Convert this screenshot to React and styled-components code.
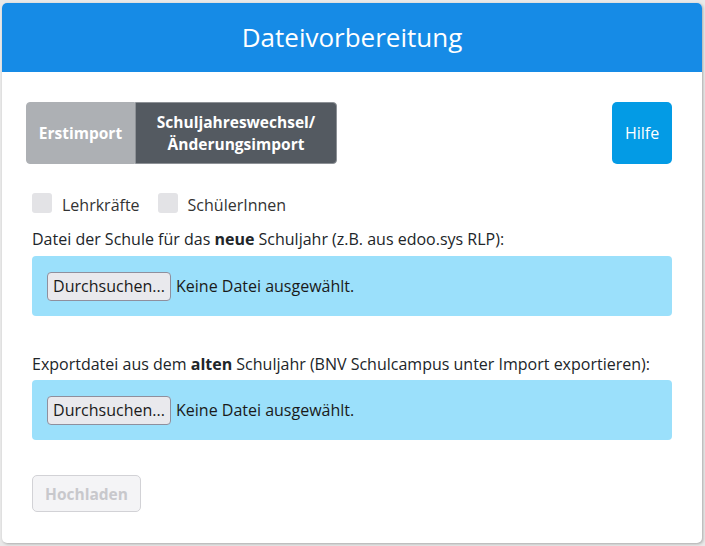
import React from "react";
import styled, { createGlobalStyle } from "styled-components";

const GlobalStyle = createGlobalStyle`
  html, body { margin: 0; padding: 0; }
  body {
    background: #e9e9e9;
    font-family: "Open Sans", "Liberation Sans", sans-serif;
    color: #212529;
  }
`;

const Page = styled.div`
  padding: 3px 3px 3px 2px;
`;

const Card = styled.div`
  width: 700px;
  height: 540px;
  background: #fff;
  border-radius: 5px;
  box-shadow: 1px 1px 3px rgba(0, 0, 0, 0.28);
  display: flex;
  flex-direction: column;
  overflow: hidden;
`;

const Header = styled.div`
  height: 69px;
  background: #168be6;
  display: flex;
  align-items: center;
  justify-content: center;
`;

const Title = styled.h1`
  margin: 0;
  font-weight: 400;
  font-size: 26px;
  font-stretch: 90%;
  color: #fff;
  line-height: 1;
  padding-bottom: 1px;
`;

const Body = styled.div`
  padding: 30px 30px 0 30px;
  display: flex;
  flex-direction: column;
`;

const TopRow = styled.div`
  display: flex;
  justify-content: space-between;
  align-items: stretch;
  height: 62px;
`;

const TabGroup = styled.div`
  display: flex;
  margin-left: -6px;
`;

const Tab = styled.button`
  font-family: "Open Sans", sans-serif;
  font-weight: 700;
  font-size: 15.5px;
  font-stretch: 88%;
  line-height: 22px;
  color: #fff;
  border: 1px solid ${(p) => (p.$active ? "#8d9196" : "#adb0b4")};
  background: ${(p) => (p.$active ? "#545a61" : "#adb0b4")};
  width: ${(p) => p.$w}px;
  padding: 0 4px;
  border-radius: ${(p) => (p.$first ? "4px 0 0 4px" : "0 4px 4px 0")};
`;

const HelpButton = styled.button`
  font-family: "Open Sans", sans-serif;
  font-size: 16px;
  font-stretch: 90%;
  color: #fff;
  background: #039be5;
  border: none;
  border-radius: 5px;
  width: 60px;
  padding: 0;
`;

const CheckRow = styled.div`
  display: flex;
  align-items: center;
  margin-top: 29px;
  height: 20px;
  gap: 18px;
`;

const CheckItem = styled.label`
  display: flex;
  align-items: center;
  gap: 10px;
  font-size: 16px;
  color: #333;
  span + span { padding-top: 3px; }
`;

const CheckBox = styled.span`
  width: 20px;
  height: 20px;
  border-radius: 3px;
  background: #e3e3e6;
`;

const FieldLabel = styled.div`
  font-size: 16px;
  line-height: 24px;
  margin-top: ${(p) => p.$mt}px;
  color: #212529;
  b { font-weight: 700; }
`;

const FileBox = styled.div`
  margin-top: ${(p) => p.$mt}px;
  height: 60px;
  background: #9be0fb;
  border-radius: 4px;
  display: flex;
  align-items: center;
  padding: 0 15px;
  gap: 5px;
  font-size: 16px;
  color: #1a1a1a;
`;

const BrowseButton = styled.button`
  font-family: "Open Sans", sans-serif;
  font-size: 16px;
  height: 29px;
  width: 124px;
  padding: 0;
  background: #e9e9ed;
  border: 1px solid #8f8f9d;
  border-radius: 4px;
  color: #1a1a1a;
`;

const UploadButton = styled.button`
  margin-top: 35px;
  align-self: flex-start;
  font-family: "Open Sans", sans-serif;
  font-weight: 700;
  font-size: 15.5px;
  font-stretch: 88%;
  color: #c8c8cc;
  background: #f4f4f6;
  border: 1px solid #d2d2d6;
  border-radius: 5px;
  width: 109px;
  height: 37px;
  padding: 0;
`;

export default function App() {
  return (
    <>
      <GlobalStyle />
      <Page>
        <Card>
          <Header>
            <Title>Dateivorbereitung</Title>
          </Header>
          <Body>
            <TopRow>
              <TabGroup>
                <Tab $first $w={109}>Erstimport</Tab>
                <Tab $active $w={202}>
                  Schuljahreswechsel/
                  <br />
                  Änderungsimport
                </Tab>
              </TabGroup>
              <HelpButton>Hilfe</HelpButton>
            </TopRow>
            <CheckRow>
              <CheckItem>
                <CheckBox />
                <span>Lehrkräfte</span>
              </CheckItem>
              <CheckItem>
                <CheckBox />
                <span>SchülerInnen</span>
              </CheckItem>
            </CheckRow>
            <FieldLabel $mt={14}>
              Datei der Schule für das <b>neue</b> Schuljahr (z.B. aus edoo.sys RLP):
            </FieldLabel>
            <FileBox $mt={5}>
              <BrowseButton>Durchsuchen...</BrowseButton>
              <span>Keine Datei ausgewählt.</span>
            </FileBox>
            <FieldLabel $mt={36}>
              Exportdatei aus dem <b>alten</b> Schuljahr (BNV Schulcampus unter Import exportieren):
            </FieldLabel>
            <FileBox $mt={4}>
              <BrowseButton>Durchsuchen...</BrowseButton>
              <span>Keine Datei ausgewählt.</span>
            </FileBox>
            <UploadButton disabled>Hochladen</UploadButton>
          </Body>
        </Card>
      </Page>
    </>
  );
}
